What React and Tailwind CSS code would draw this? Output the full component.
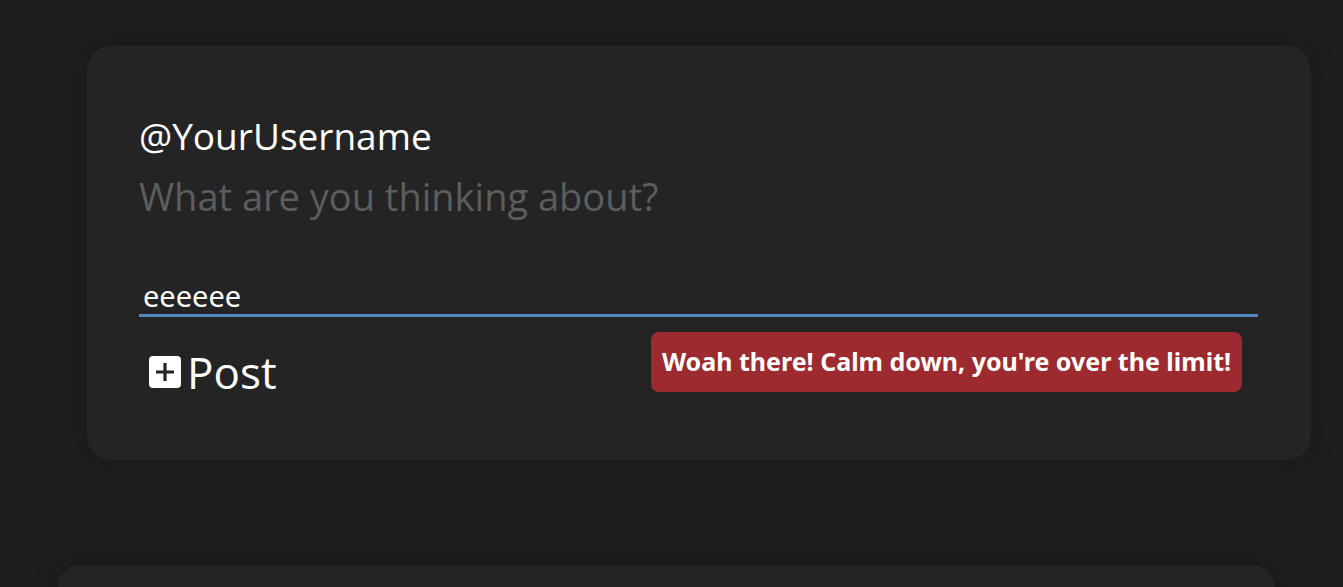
import { useState } from "react";

function PlusSquare() {
    return (
        <svg width="32" height="32" viewBox="0 0 32 32">
            <rect x="0" y="0" width="32" height="32" rx="4" fill="#ffffff" />
            <path d="M16 7v18M7 16h18" stroke="#242424" strokeWidth="3.2" />
        </svg>
    );
}

export default function App() {
    const [text, setText] = useState("eeeeee");

    return (
        <div className="h-[587px] w-full overflow-hidden bg-[#1e1e1e] pt-[46px]">
            <div className="ml-[87px] w-[1224px] h-[414px] rounded-3xl bg-[#242424] shadow-[0_0_24px_rgba(0,0,0,0.25)] pl-[52px] pr-[53px] pt-[68px] font-['Open_Sans',sans-serif]">
                <h2 className="text-[37px] leading-[44px] text-white">@YourUsername</h2>
                <p className="text-[38px] leading-[44px] text-[#5b5d5e] mt-[16px]">What are you thinking about?</p>

                <div className="mt-[60px] border-b-[3px] border-[#5686bf]">
                    <input
                        value={text}
                        onChange={e => setText(e.target.value)}
                        className="w-full bg-transparent pl-[4px] text-[29px] leading-[36px] text-white outline-none font-['Noto_Sans',sans-serif]"
                    />
                </div>

                <div className="mt-[15px] flex items-start justify-between">
                    <button className="ml-[10px] mt-[15px] flex items-center gap-[6px] text-white">
                        <PlusSquare />
                        <span className="text-[44px] leading-[50px]">Post</span>
                    </button>
                    <div className="mr-[16px] flex h-[60px] w-[591px] items-center justify-center rounded-lg bg-[#9c2a2e] text-[25px] font-bold text-white font-['Noto_Sans',sans-serif]">
                        Woah there! Calm down, you're over the limit!
                    </div>
                </div>
            </div>

            <div className="mt-[105px] ml-[57px] w-[1218px] h-[100px] rounded-3xl bg-[#242424] shadow-[0_0_24px_rgba(0,0,0,0.25)]" />
        </div>
    );
}
